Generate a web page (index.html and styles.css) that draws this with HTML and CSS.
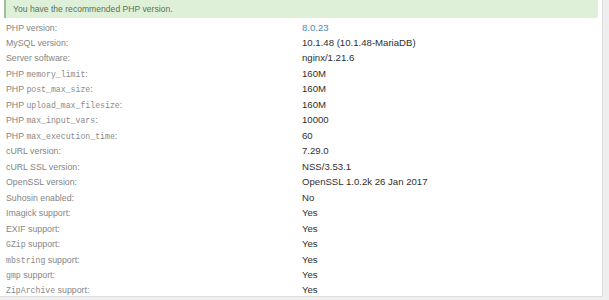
FILE: index.html
```html
<!DOCTYPE html>
<html>
<head>
<meta charset="utf-8">
<link rel="stylesheet" href="styles.css">
</head>
<body>
<div class="panel">
  <div class="notice">You have the recommended PHP version.</div>
  <div class="table">
    <div class="row"><span class="label">PHP version:</span><span class="value link">8.0.23</span></div>
    <div class="row"><span class="label">MySQL version:</span><span class="value">10.1.48 (10.1.48-MariaDB)</span></div>
    <div class="row"><span class="label">Server software:</span><span class="value">nginx/1.21.6</span></div>
    <div class="row"><span class="label">PHP <code>memory_limit</code>:</span><span class="value">160M</span></div>
    <div class="row"><span class="label">PHP <code>post_max_size</code>:</span><span class="value">160M</span></div>
    <div class="row"><span class="label">PHP <code>upload_max_filesize</code>:</span><span class="value">160M</span></div>
    <div class="row"><span class="label">PHP <code>max_input_vars</code>:</span><span class="value">10000</span></div>
    <div class="row"><span class="label">PHP <code>max_execution_time</code>:</span><span class="value">60</span></div>
    <div class="row"><span class="label">cURL version:</span><span class="value">7.29.0</span></div>
    <div class="row"><span class="label">cURL SSL version:</span><span class="value">NSS/3.53.1</span></div>
    <div class="row"><span class="label">OpenSSL version:</span><span class="value">OpenSSL 1.0.2k 26 Jan 2017</span></div>
    <div class="row"><span class="label">Suhosin enabled:</span><span class="value">No</span></div>
    <div class="row"><span class="label">Imagick support:</span><span class="value">Yes</span></div>
    <div class="row"><span class="label">EXIF support:</span><span class="value">Yes</span></div>
    <div class="row"><span class="label"><code>GZip</code> support:</span><span class="value">Yes</span></div>
    <div class="row"><span class="label"><code>mbstring</code> support:</span><span class="value">Yes</span></div>
    <div class="row"><span class="label"><code>gmp</code> support:</span><span class="value">Yes</span></div>
    <div class="row"><span class="label"><code>ZipArchive</code> support:</span><span class="value">Yes</span></div>
  </div>
</div>
</body>
</html>
```

FILE: styles.css
```css
html, body {
  margin: 0;
  padding: 0;
}
body {
  background: #efefef;
  font-family: "Liberation Sans", Arial, sans-serif;
  font-size: 9.6px;
  width: 609px;
  height: 300px;
  overflow: hidden;
}
.panel {
  width: 603px;
  height: 297px;
  background: #fff;
  border-right: 1px solid #dcdcdc;
  border-bottom: 1px solid #dcdcdc;
  box-sizing: border-box;
  display: flex;
  flex-direction: column;
}
.notice {
  margin-left: 4px;
  width: 594px;
  height: 18px;
  box-sizing: border-box;
  background: #dff0d8;
  border-left: 2px solid #9cbf93;
  border-bottom-right-radius: 3px;
  color: #5a7358;
  font-size: 8.6px;
  padding-left: 7px;
  line-height: 18px;
}
.table {
  padding-top: 1.5px;
  padding-left: 6px;
  display: flex;
  flex-direction: column;
}
.row {
  display: grid;
  grid-template-columns: 296px 1fr;
  align-items: baseline;
  height: 15.47px;
  line-height: 15.47px;
}
.label {
  color: #858585;
  font-size: 8.8px;
}
.value {
  color: #2f2f2f;
}
.link {
  color: #4a8bbb;
}
code {
  font-family: "Liberation Mono", "Courier New", monospace;
  font-size: 8.2px;
  color: #8a8a8a;
}
```
